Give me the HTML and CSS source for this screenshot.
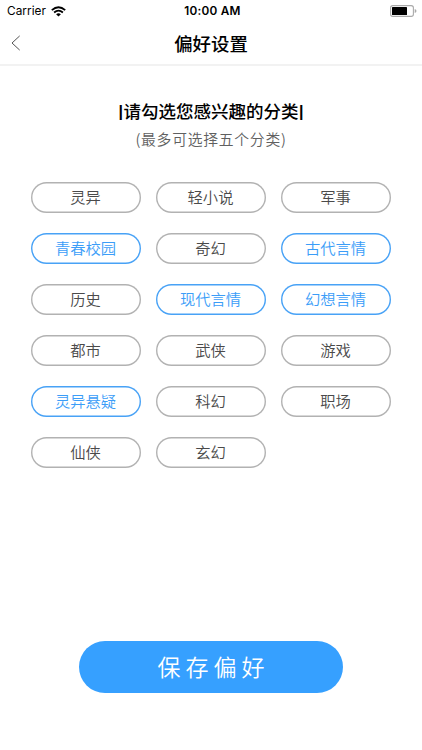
FILE: index.html
```html
<!DOCTYPE html>
<html lang="zh-CN">
<head>
<meta charset="utf-8">
<title>偏好设置</title>
<link rel="stylesheet" href="styles.css">
</head>
<body>
<div class="status">
  <div class="carrier"><span>Carrier</span>
    <svg class="wifi" width="15" height="11" viewBox="0 0 15 11"><g fill="none" stroke="#000" stroke-width="1.8"><path d="M.8 4.1Q7.5-1.7 14.2 4.1"/><path d="M3.1 6.5Q7.5 2.8 11.9 6.5"/></g><path d="M5.1 8.2Q7.5 6.2 9.9 8.2L7.5 10.5Z"/></svg>
  </div>
  <div class="time">10:00 AM</div>
  <svg class="battery" width="27" height="12" viewBox="0 0 27 12"><rect x=".6" y=".6" width="22.8" height="10.8" rx="2.2" fill="none" stroke="#aaa" stroke-width="1.1"/><rect x="2" y="2" width="15" height="8" rx=".6"/><path d="M24.7 4.1Q26.5 4.6 26.5 6T24.7 7.9Z" fill="#aaa"/></svg>
</div>
<header class="nav">
  <svg class="back" width="10" height="17" viewBox="0 0 10 17"><path d="M8.7 .9L1 8L8.7 15.1" fill="none" stroke="#555" stroke-width="1"/></svg>
  <h1>偏好设置</h1>
</header>
<main>
  <h2><span class="bar">|</span>请勾选您感兴趣的分类<span class="bar">|</span></h2>
  <p class="hint">(最多可选择五个分类)</p>
  <div class="grid">
    <button>灵异</button><button>轻小说</button><button>军事</button>
    <button class="on">青春校园</button><button>奇幻</button><button class="on">古代言情</button>
    <button>历史</button><button class="on">现代言情</button><button class="on">幻想言情</button>
    <button>都市</button><button>武侠</button><button>游戏</button>
    <button class="on">灵异悬疑</button><button>科幻</button><button>职场</button>
    <button>仙侠</button><button>玄幻</button>
  </div>
</main>
<button class="save">保存偏好</button>
</body>
</html>
```

FILE: styles.css
```css
* { box-sizing: border-box; }
body {
  margin: 0;
  height: 750px;
  display: flex;
  flex-direction: column;
  background: #fff;
  color: #000;
  font-family: "Noto Sans CJK SC", sans-serif;
}
h1, h2, p { margin: 0; }
button { padding: 0; font-family: inherit; }
.status {
  height: 22px;
  padding: 0 5px 0 7px;
  display: grid;
  grid-template-columns: 1fr auto 1fr;
  align-items: center;
  font: 11.8px/22px Inter, sans-serif;
}
.carrier { display: flex; align-items: center; gap: 5px; letter-spacing: 0.05px; }
.time { font-weight: 600; letter-spacing: 0.25px; padding-left: 1px; }
.battery { justify-self: end; }
.nav {
  height: 44px;
  padding: 0 11px;
  display: grid;
  grid-template-columns: 1fr auto 1fr;
  align-items: center;
  border-bottom: 2px solid #f2f2f2;
}
.nav h1 { grid-column: 2; font-size: 18.4px; font-weight: 500; line-height: 42px; }
main { padding: 32px 31px 0; text-align: center; }
h2 { height: 26px; font-size: 17.5px; font-weight: 500; line-height: 26px; white-space: nowrap; }
.bar { font: 700 16px/1 "Liberation Sans", sans-serif; margin: 0 0.6px; vertical-align: 1.5px; }
.hint { font-size: 14.8px; line-height: 24px; margin-top: 3px; color: #606060; letter-spacing: 0.75px; font-weight: 350; }
.grid {
  margin-top: 31px;
  display: grid;
  grid-template-columns: repeat(3, 110px);
  grid-auto-rows: 31px;
  gap: 20px 15px;
}
.grid button {
  border: 0;
  box-shadow: inset 0 0 0 1.4px #b2b2b2;
  border-radius: 15.5px;
  background: #fff;
  color: #4a4a4a;
  padding: 0 1px 2px 0;
  font-size: 15.3px;
  line-height: 29px;
  font-weight: 350;
}
.grid .on { box-shadow: inset 0 0 0 1.4px #48a2f6; color: #3b9df8; }
.save {
  width: 264px;
  height: 52px;
  margin: auto auto 57px;
  padding-bottom: 2px;
  border: 0;
  border-radius: 26px;
  background: #36a0ff;
  color: #fff;
  font-size: 23px;
  font-weight: 350;
  line-height: 50px;
  letter-spacing: 5px;
  text-indent: 5px;
}
```
